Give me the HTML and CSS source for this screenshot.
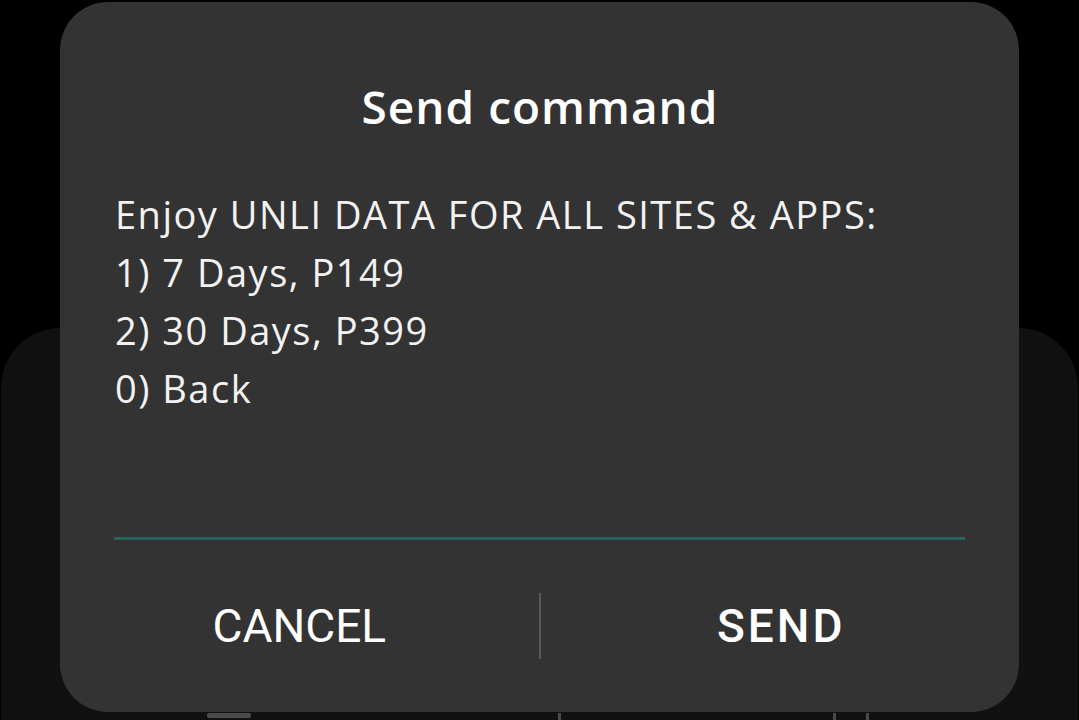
FILE: index.html
```html
<!DOCTYPE html>
<html lang="en">
<head>
<meta charset="utf-8">
<title>Send command</title>
<link rel="stylesheet" href="styles.css">
</head>
<body>
<div class="screen">
  <div class="backdrop">
    <div class="peek">
      <span class="peek-bar"></span>
      <span class="peek-tick t1"></span>
      <span class="peek-tick t2"></span>
      <span class="peek-tick t3"></span>
    </div>
  </div>
  <div class="dialog">
    <div class="title">Send command</div>
    <div class="message">
      <div class="line">Enjoy UNLI DATA FOR ALL SITES &amp; APPS:</div>
      <div class="line">1) 7 Days, P149</div>
      <div class="line">2) 30 Days, P399</div>
      <div class="line">0) Back</div>
    </div>
    <div class="field"></div>
    <div class="actions">
      <div class="btn cancel">CANCEL</div>
      <div class="sep"></div>
      <div class="btn send">SEND</div>
    </div>
  </div>
</div>
</body>
</html>
```
FILE: styles.css
```css
html, body {
  margin: 0;
  padding: 0;
  background: #000;
}
body {
  width: 1079px;
  height: 720px;
  overflow: hidden;
  font-family: "Open Sans", "Noto Sans", sans-serif;
}
.screen {
  position: relative;
  width: 1079px;
  height: 720px;
  display: flex;
  flex-direction: column;
}
.backdrop {
  margin: 328px 1px 0 1px;
  flex: 1;
  background: #111111;
  border-radius: 60px 60px 0 0;
  padding-top: 385px;
  box-sizing: border-box;
}
.peek {
  display: flex;
  align-items: flex-start;
  height: 7px;
}
.peek-bar {
  margin-left: 206px;
  width: 44px;
  height: 5px;
  background: #4a4a4a;
  border-radius: 2px;
}
.peek-tick {
  width: 3px;
  height: 7px;
  background: #4a4a4a;
}
.t1 { margin-left: 307px; }
.t2 { margin-left: 272px; }
.t3 { margin-left: 30px; }
.dialog {
  position: absolute;
  left: 60px;
  top: 2px;
  width: 959px;
  height: 710px;
  background: #333333;
  border-radius: 48px;
  display: flex;
  flex-direction: column;
  box-sizing: border-box;
  padding: 74px 54px 0 55px;
}
.title {
  font-size: 46px;
  line-height: 60px;
  font-weight: 600;
  letter-spacing: 1px;
  color: #ffffff;
  text-align: center;
}
.message {
  margin-top: 49px;
  color: #f2f2f2;
  font-size: 38px;
  line-height: 58px;
  letter-spacing: 1.5px;
}
.field {
  margin-top: 40px;
  height: 80px;
  border-bottom: 3px solid #26655f;
  margin-left: -1px;
}
.actions {
  margin: 20px -54px 0 -55px;
  height: 132px;
  display: flex;
  align-items: center;
}
.btn {
  flex: 1;
  text-align: center;
  font-family: Roboto, "Liberation Sans", sans-serif;
  font-size: 46px;
  line-height: 46px;
  color: #ffffff;
}
.send {
  font-weight: 500;
  letter-spacing: 3px;
  text-indent: 3px;
}
.sep {
  width: 2px;
  height: 66px;
  background: #5a5a5a;
}
```
